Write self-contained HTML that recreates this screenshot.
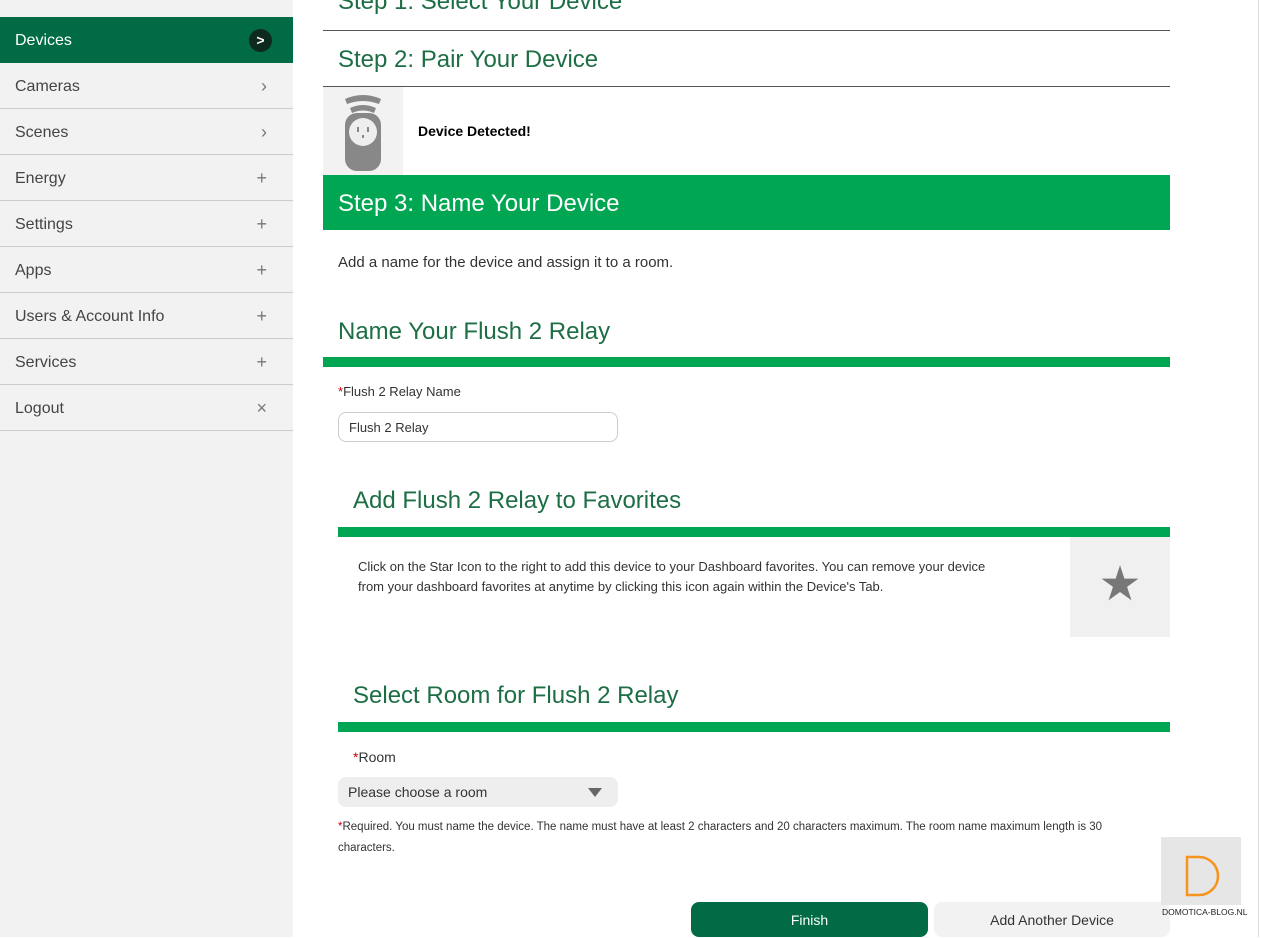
<!DOCTYPE html><html><head><style>
body{margin:0;width:1261px;height:937px;overflow:hidden;background:#fff;font-family:"Liberation Sans",sans-serif;position:relative;color:#333}
.sb{position:absolute;left:0;top:0;width:293px;height:937px;background:#f2f2f2}
.it{position:absolute;left:0;width:293px;height:45px;border-bottom:1px solid #ccc;font-size:16px;color:#444;line-height:47px}
.it span{position:absolute;left:15px}
.it i{position:absolute;right:26px;font-style:normal;color:#777;font-size:18px}
.a{position:absolute}
.h{color:#1e6e45;font-size:24px;font-weight:300}
.g{position:absolute;background:#00a651}
</style></head><body>
<div class="sb">
<div class="it" style="top:-28px"></div>
<div class="it" style="top:17px;background:#006b44;color:#fff;border:none;height:46px"><span>Devices</span><b style="position:absolute;left:249px;top:12px;width:23px;height:23px;border-radius:50%;background:#0e2a1e;color:#fff;line-height:22px;text-align:center;font-size:14px">&gt;</b></div>
<div class="it" style="top:63px"><span>Cameras</span><i>›</i></div>
<div class="it" style="top:109px"><span>Scenes</span><i>›</i></div>
<div class="it" style="top:155px"><span>Energy</span><i>+</i></div>
<div class="it" style="top:201px"><span>Settings</span><i>+</i></div>
<div class="it" style="top:247px"><span>Apps</span><i>+</i></div>
<div class="it" style="top:293px"><span>Users &amp; Account Info</span><i>+</i></div>
<div class="it" style="top:339px"><span>Services</span><i>+</i></div>
<div class="it" style="top:385px"><span>Logout</span><i>×</i></div>
</div>
<div class="a h" style="left:338px;top:-12px">Step 1: Select Your Device</div>
<div class="a" style="left:323px;top:30px;width:847px;border-top:1px solid #555"></div>
<div class="a h" style="left:338px;top:46px">Step 2: Pair Your Device</div>
<div class="a" style="left:323px;top:86px;width:847px;border-top:1px solid #555"></div>
<div class="a" style="left:323px;top:87px;width:80px;height:88px;background:#f2f2f2">
<svg width="80" height="88"><path d="M22 12 Q40 4 58 12 L56 17 Q40 11 24 17Z M27 21 Q40 15 53 21 L51 26 Q40 21 29 26Z" fill="#888"/><rect x="22" y="26" width="36" height="58" rx="12" fill="#888"/><circle cx="40" cy="45" r="14" fill="#eee"/><rect x="34" y="40" width="2" height="5" fill="#888"/><rect x="44" y="40" width="2" height="5" fill="#888"/><rect x="39" y="48" width="2" height="3" fill="#888"/></svg></div>
<div class="a" style="left:418px;top:123px;font-size:14px;font-weight:bold;color:#000">Device Detected!</div>
<div class="g" style="left:323px;top:175px;width:847px;height:55px"></div>
<div class="a h" style="left:338px;top:190px;color:#fff">Step 3: Name Your Device</div>
<div class="a" style="left:338px;top:254px;font-size:15px">Add a name for the device and assign it to a room.</div>
<div class="a h" style="left:338px;top:318px">Name Your Flush 2 Relay</div>
<div class="g" style="left:323px;top:357px;width:847px;height:10px"></div>
<div class="a" style="left:338px;top:384px;font-size:13px"><span style="color:#c00">*</span>Flush 2 Relay Name</div>
<div class="a" style="left:338px;top:412px;width:268px;height:28px;border:1px solid #ccc;border-radius:8px;font-size:13px;line-height:30px;padding-left:10px">Flush 2 Relay</div>
<div class="a h" style="left:353px;top:487px">Add Flush 2 Relay to Favorites</div>
<div class="g" style="left:338px;top:527px;width:832px;height:10px"></div>
<div class="a" style="left:358px;top:557px;font-size:13px;line-height:20px;width:645px">Click on the Star Icon to the right to add this device to your Dashboard favorites. You can remove your device from your dashboard favorites at anytime by clicking this icon again within the Device's Tab.</div>
<div class="a" style="left:1070px;top:537px;width:100px;height:100px;background:#f0f0f0;text-align:center;line-height:96px;font-size:48px;color:#777">★</div>
<div class="a h" style="left:353px;top:682px">Select Room for Flush 2 Relay</div>
<div class="g" style="left:338px;top:722px;width:832px;height:10px"></div>
<div class="a" style="left:353px;top:749px;font-size:14px"><span style="color:#c00">*</span>Room</div>
<div class="a" style="left:338px;top:777px;width:270px;height:30px;background:#eee;border-radius:8px;font-size:14px;line-height:30px;padding-left:10px">Please choose a room<span style="position:absolute;right:16px;top:11px;border-left:7px solid transparent;border-right:7px solid transparent;border-top:9px solid #666"></span></div>
<div class="a" style="left:338px;top:817px;font-size:11.5px;line-height:21px;width:800px"><span style="color:#c00">*</span>Required. You must name the device. The name must have at least 2 characters and 20 characters maximum. The room name maximum length is 30 characters.</div>
<div class="a" style="left:691px;top:902px;width:237px;height:35px;background:#006b44;border-radius:8px;color:#fff;font-size:14px;text-align:center;line-height:36px">Finish</div>
<div class="a" style="left:934px;top:902px;width:236px;height:35px;background:#f2f2f2;border-radius:8px;font-size:14px;text-align:center;line-height:36px">Add Another Device</div>
<div class="a" style="left:1161px;top:837px;width:80px;height:68px;background:#e6e6e6"><svg width="80" height="68"><path d="M26 20 H38 A16 16 0 0 1 38 58 H26 Z" fill="none" stroke="#f7941d" stroke-width="2.5"/></svg></div>
<div class="a" style="left:1162px;top:907px;font-size:8.5px;color:#222">DOMOTICA-BLOG.NL</div>
<div class="a" style="left:1258px;top:0;width:1px;height:937px;background:#ddd"></div>
</body></html>
